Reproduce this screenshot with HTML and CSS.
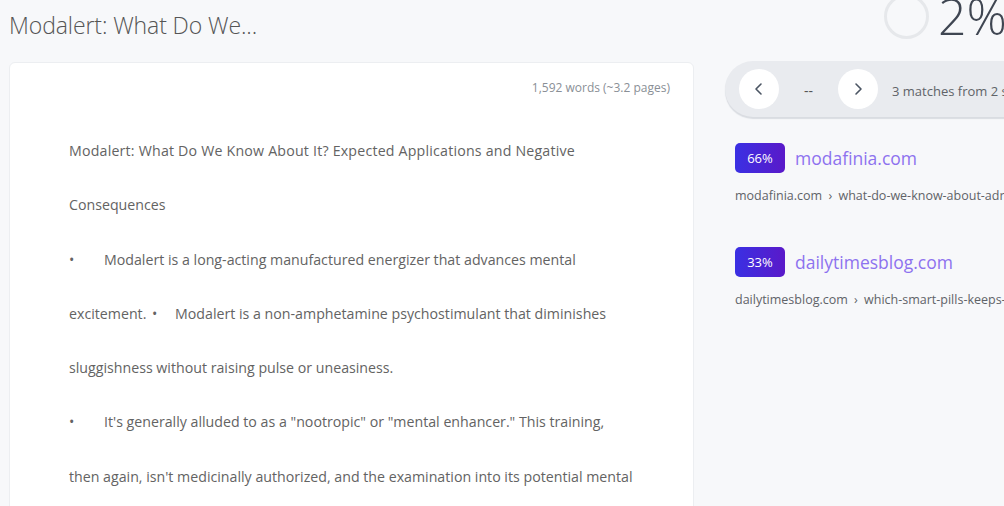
FILE: index.html
```html
<!DOCTYPE html>
<html>
<head>
<meta charset="utf-8">
<link rel="stylesheet" href="styles.css">
</head>
<body>
<div class="page">
  <div class="top-left">
    <h1 class="title">Modalert: What Do We...</h1>
  </div>
  <div class="top-right">
    <div class="ring"></div>
    <div class="score">2%</div>
  </div>
  <div class="card">
    <div class="wordcount">1,592 words (~3.2 pages)</div>
    <div class="doc">
      <div class="line">Modalert: What Do We Know About It? Expected Applications and Negative</div>
      <div class="line">Consequences</div>
      <div class="line"><span class="bul">•</span>Modalert is a long-acting manufactured energizer that advances mental</div>
      <div class="line">excitement. <span class="bul2">•</span>Modalert is a non-amphetamine psychostimulant that diminishes</div>
      <div class="line">sluggishness without raising pulse or uneasiness.</div>
      <div class="line"><span class="bul">•</span>It's generally alluded to as a "nootropic" or "mental enhancer." This training,</div>
      <div class="line">then again, isn't medicinally authorized, and the examination into its potential mental</div>
    </div>
  </div>
  <div class="side">
    <div class="nav">
      <button class="circle-btn" aria-label="previous">
        <svg width="14" height="14" viewBox="0 0 14 14"><path d="M9 2 L4 7 L9 12" fill="none" stroke="#4b5563" stroke-width="1.6" stroke-linecap="round" stroke-linejoin="round"/></svg>
      </button>
      <span class="dashes">--</span>
      <button class="circle-btn" aria-label="next">
        <svg width="14" height="14" viewBox="0 0 14 14"><path d="M5 2 L10 7 L5 12" fill="none" stroke="#4b5563" stroke-width="1.6" stroke-linecap="round" stroke-linejoin="round"/></svg>
      </button>
      <span class="matches">3 matches from 2 sources</span>
    </div>
    <div class="results">
      <div class="result">
        <div class="res-head"><span class="badge">66%</span><span class="site">modafinia.com</span></div>
        <div class="crumb">modafinia.com <span class="sep">›</span> what-do-we-know-about-adrafinil</div>
      </div>
      <div class="result">
        <div class="res-head"><span class="badge">33%</span><span class="site">dailytimesblog.com</span></div>
        <div class="crumb">dailytimesblog.com <span class="sep">›</span> which-smart-pills-keeps-you-awake</div>
      </div>
    </div>
  </div>
</div>
</body>
</html>
```

FILE: styles.css
```css
* { box-sizing: border-box; }
html, body {
  margin: 0;
  padding: 0;
  height: 100%;
  overflow: hidden;
  background: #f7f8fa;
  font-family: "Open Sans", "Noto Sans", sans-serif;
}
.page {
  display: grid;
  grid-template-columns: 685px 420px;
  grid-template-rows: 62px auto;
  column-gap: 31px;
  padding-left: 9px;
  width: 1200px;
}
.top-left {
  display: flex;
  align-items: flex-start;
}
.title {
  margin: 8px 0 0 0;
  font-size: 23px;
  font-weight: 300;
  color: #555;
  line-height: 34px;
  letter-spacing: -0.1px;
}
.top-right {
  display: flex;
  align-items: flex-start;
  padding-left: 159px;
  margin-top: -6px;
}
.ring {
  width: 45px;
  height: 45px;
  border-radius: 50%;
  border: 3px solid #e6e8eb;
  flex: none;
}
.score {
  margin-left: 9px;
  font-size: 50px;
  font-weight: 300;
  color: #3f4652;
  line-height: 56px;
  margin-top: -6px;
}
.card {
  background: #fff;
  border: 1px solid #eceef1;
  border-radius: 6px;
  height: 460px;
  padding: 16px 23px 0 59px;
}
.wordcount {
  text-align: right;
  font-size: 12px;
  color: #8a8f96;
  line-height: 18px;
}
.doc {
  margin-top: 27px;
  font-size: 14.2px;
  color: #636363;
}
.line {
  line-height: 54.3px;
  white-space: nowrap;
}
.line:first-child {
  letter-spacing: 0.2px;
}
.bul {
  display: inline-block;
  width: 35px;
}
.bul2 {
  display: inline-block;
  width: 25px;
  padding-left: 2px;
}
.side {
  display: flex;
  flex-direction: column;
}
.nav {
  height: 56px;
  margin-top: -1px;
  background: #e9ebef;
  border-radius: 28px;
  display: flex;
  align-items: center;
  padding-left: 14px;
  box-shadow: 0 2px 1px #d9dce1;
}
.circle-btn {
  width: 40px;
  height: 40px;
  border-radius: 50%;
  border: none;
  background: #fff;
  display: flex;
  align-items: center;
  justify-content: center;
  padding: 0;
  flex: none;
}
.dashes {
  width: 59px;
  text-align: center;
  font-size: 14px;
  color: #555;
  padding-top: 2px;
}
.matches {
  margin-left: 14px;
  font-size: 13px;
  color: #606368;
  white-space: nowrap;
  padding-top: 3px;
}
.results {
  display: flex;
  flex-direction: column;
  gap: 41px;
  padding-left: 10px;
  margin-top: 26px;
}
.res-head {
  display: flex;
  align-items: center;
  gap: 10px;
}
.badge {
  width: 50px;
  height: 30px;
  border-radius: 5px;
  background: linear-gradient(90deg, #3a30e3, #5a19c9);
  color: #fff;
  font-size: 13px;
  display: flex;
  align-items: center;
  justify-content: center;
}
.site {
  font-size: 17.5px;
  color: #8d72ef;
  white-space: nowrap;
}
.crumb {
  margin-top: 13px;
  font-size: 12.5px;
  color: #5f6368;
  white-space: nowrap;
  line-height: 20px;
}
.sep {
  margin: 0 3px;
}
```
